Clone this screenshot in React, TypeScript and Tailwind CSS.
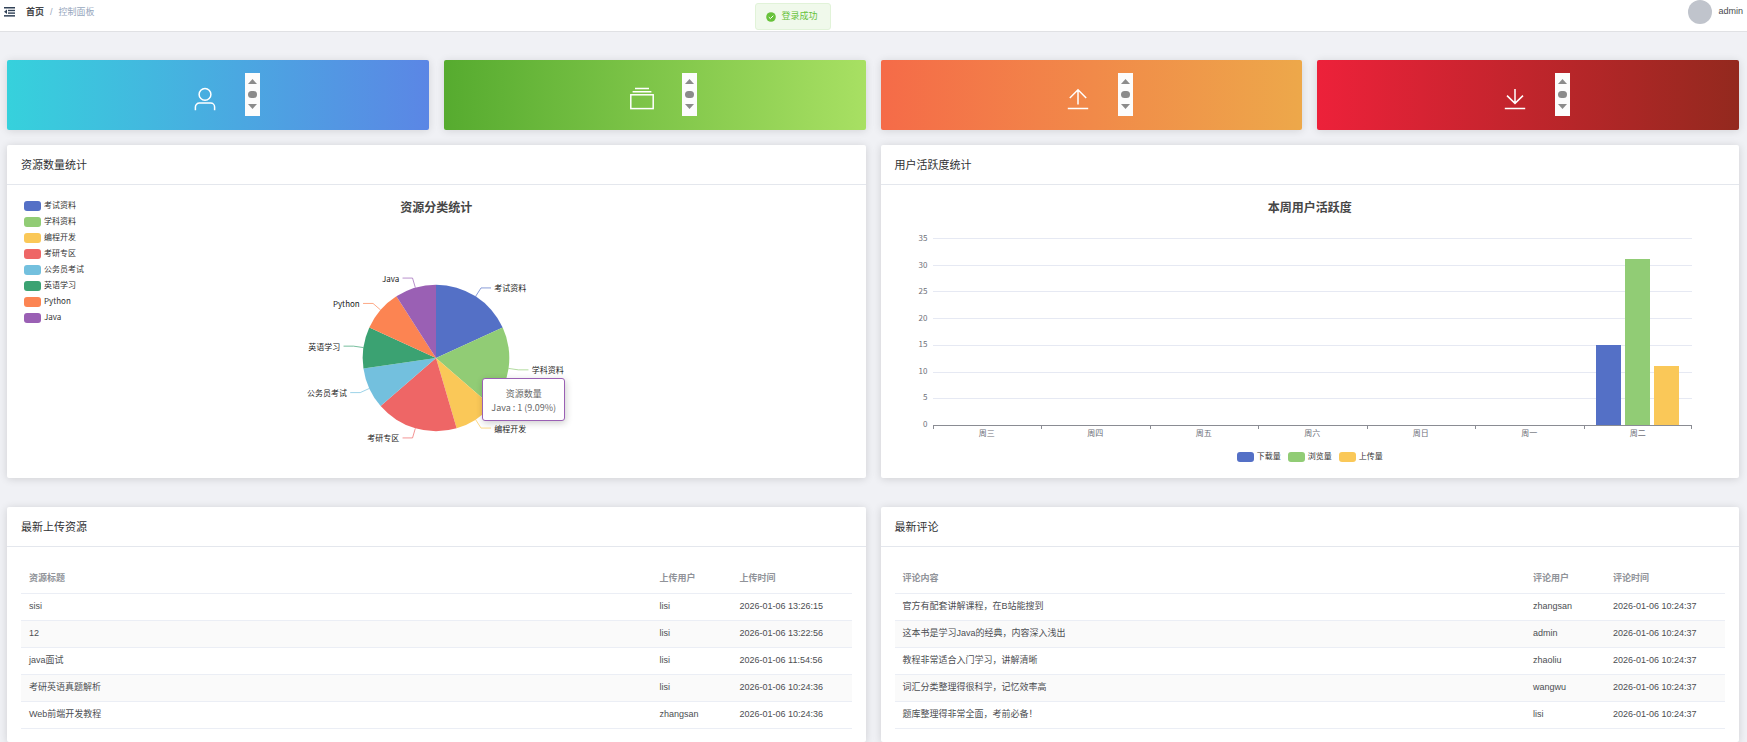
import type { ReactNode } from 'react';

const PALETTE = ['#5470c6', '#91cc75', '#fac858', '#ee6666', '#73c0de', '#3ba272', '#fc8452', '#9a60b4'];

const CATEGORIES = [
  { name: '考试资料', value: 2 },
  { name: '学科资料', value: 2 },
  { name: '编程开发', value: 1 },
  { name: '考研专区', value: 2 },
  { name: '公务员考试', value: 1 },
  { name: '英语学习', value: 1 },
  { name: 'Python', value: 1 },
  { name: 'Java', value: 1 },
];

const DAYS = ['周三', '周四', '周五', '周六', '周日', '周一', '周二'];
const SERIES = [
  { name: '下载量', data: [0, 0, 0, 0, 0, 0, 15] },
  { name: '浏览量', data: [0, 0, 0, 0, 0, 0, 31] },
  { name: '上传量', data: [0, 0, 0, 0, 0, 0, 11] },
];
const TICKS = [35, 30, 25, 20, 15, 10, 5, 0];
const AXIS_MAX = 35;

const UPLOADS = [
  ['sisi', 'lisi', '2026-01-06 13:26:15'],
  ['12', 'lisi', '2026-01-06 13:22:56'],
  ['java面试', 'lisi', '2026-01-06 11:54:56'],
  ['考研英语真题解析', 'lisi', '2026-01-06 10:24:36'],
  ['Web前端开发教程', 'zhangsan', '2026-01-06 10:24:36'],
];

const COMMENTS = [
  ['官方有配套讲解课程，在B站能搜到', 'zhangsan', '2026-01-06 10:24:37'],
  ['这本书是学习Java的经典，内容深入浅出', 'admin', '2026-01-06 10:24:37'],
  ['教程非常适合入门学习，讲解清晰', 'zhaoliu', '2026-01-06 10:24:37'],
  ['词汇分类整理得很科学，记忆效率高', 'wangwu', '2026-01-06 10:24:37'],
  ['题库整理得非常全面，考前必备！', 'lisi', '2026-01-06 10:24:37'],
];

function FoldIcon() {
  return (
    <svg width="11" height="10" viewBox="0 0 11 10" fill="#304156" aria-hidden="true">
      <rect x="0" y="0" width="11" height="1.5" />
      <rect x="4" y="2.8" width="7" height="1.4" />
      <rect x="4" y="5.4" width="7" height="1.4" />
      <rect x="0" y="8.1" width="11" height="1.5" />
      <path d="M0 4.8 3 2.6V7z" />
    </svg>
  );
}

function Header() {
  return (
    <header className="flex h-8 items-start justify-between border-b border-[#e0e1e4] bg-white pr-1 pl-1">
      <div className="flex h-6 items-center">
        <button type="button" aria-label="折叠菜单">
          <FoldIcon />
        </button>
        <nav className="ml-[11px] flex items-center text-[9px] leading-3">
          <a href="#" className="font-bold text-[#45464a]">首页</a>
          <span className="mx-[6px] text-[#97a8be]">/</span>
          <span className="text-[#97a8be]">控制面板</span>
        </nav>
      </div>
      <button type="button" className="flex h-6 items-center gap-[6px] text-[9px] text-[#48494d]">
        <span className="size-6 rounded-full bg-[#c0c4cc]" />
        admin
      </button>
    </header>
  );
}

function Toast() {
  return (
    <div
      role="status"
      className="absolute top-[3px] left-1/2 -ml-[81px] flex h-[27px] w-[76px] -translate-x-1/2 items-center gap-[6px] rounded-[3px] border border-[#e1f3d8] bg-[#f0f9eb] pl-[10px] text-[9px] text-[#67c23a]"
    >
      <svg width="10" height="10" viewBox="0 0 10 10" aria-hidden="true">
        <circle cx="5" cy="5" r="4.8" fill="#67c23a" />
        <path d="M2.8 5.1 4.4 6.6 7.3 3.7" fill="none" stroke="#fff" strokeWidth="1" />
      </svg>
      登录成功
    </div>
  );
}

// Contador desbordado: solo queda a la vista la barra de scroll
function MiniScrollbar() {
  return (
    <svg width="15" height="43" viewBox="0 0 15 43" className="mb-px" aria-hidden="true">
      <rect width="15" height="43" fill="#fcfcfc" />
      <g fill="#8b8b8b">
        <path d="M7.5 6 12 11H3z" />
        <rect x="3" y="18" width="9" height="7" rx="3.5" />
        <path d="M3 31h9l-4.5 5z" />
      </g>
    </svg>
  );
}

function StatCard({ gradient, children }: { gradient: string; children: ReactNode }) {
  return (
    <div className={`flex h-[70px] items-center justify-center gap-7 rounded-[2px] pl-[17px] shadow-[0_1px_8px_rgba(0,0,0,0.12)] ${gradient}`}>
      <svg
        width="24"
        height="24"
        viewBox="0 0 24 24"
        fill="none"
        stroke="#fff"
        strokeWidth="1.5"
        className="mt-2"
        aria-hidden="true"
      >
        {children}
      </svg>
      <MiniScrollbar />
    </div>
  );
}

function Panel({ title, children }: { title: string; children: ReactNode }) {
  return (
    <section className="rounded-[2px] bg-white shadow-[0_1px_8px_rgba(0,0,0,0.14)]">
      <h2 className="flex h-10 items-center border-b border-[#e4e7ed] px-[14px] pt-[2px] text-[11px] text-[#303133]">{title}</h2>
      <div className="px-[14px] pt-[14px] pb-[13px]">{children}</div>
    </section>
  );
}

function LegendItem({ name, color }: { name: string; color: string }) {
  return (
    <li className="flex h-[10px] items-start gap-[3px] text-[8px] leading-2 text-[#333]">
      <span className="h-[10px] w-[17px] rounded-[3px]" style={{ backgroundColor: color }} />
      {name}
    </li>
  );
}

function PieChart() {
  const cx = 150;
  const cy = 93;
  const r = 73.3;
  const total = CATEGORIES.reduce((sum, c) => sum + c.value, 0);
  const point = (angle: number, radius: number) => [cx + Math.sin(angle) * radius, cy - Math.cos(angle) * radius];
  let angle = 0;

  return (
    <svg width="300" height="180" viewBox="0 0 300 180" role="img" aria-label="资源分类统计">
      {CATEGORIES.map((category, i) => {
        const start = angle;
        const end = start + (category.value / total) * Math.PI * 2;
        angle = end;
        const mid = (start + end) / 2;
        const side = Math.sin(mid) > 0 ? 1 : -1;
        const [x1, y1] = point(start, r);
        const [x2, y2] = point(end, r);
        const [lx, ly] = point(mid, r);
        const [ex, ey] = point(mid, r + 10);
        return (
          <g key={category.name}>
            <path d={`M${cx} ${cy}L${x1} ${y1}A${r} ${r} 0 0 1 ${x2} ${y2}Z`} fill={PALETTE[i]} />
            <path d={`M${lx} ${ly}L${ex} ${ey}H${ex + side * 10}`} fill="none" stroke={PALETTE[i]} strokeWidth="0.7" />
            <text
              x={ex + side * 13.3}
              y={ey}
              dominantBaseline="central"
              textAnchor={side > 0 ? 'start' : 'end'}
              className="fill-[#222] text-[8px]"
            >
              {category.name}
            </text>
          </g>
        );
      })}
    </svg>
  );
}

function CategoryChart() {
  return (
    <div className="grid h-[266px] grid-cols-[1fr_300px_1fr] font-['Noto_Sans_CJK_SC',sans-serif]">
      <ul className="flex flex-col gap-[6px] pt-[2px] pl-[3px]">
        {CATEGORIES.map((category, i) => (
          <LegendItem key={category.name} name={category.name} color={PALETTE[i]} />
        ))}
      </ul>
      <div className="relative">
        <h3 className="text-center text-xs leading-4 font-bold text-[#464646]">资源分类统计</h3>
        <div className="mt-[50px]">
          <PieChart />
        </div>
        <div className="absolute top-[179px] left-[196px] h-[43px] w-[83px] rounded-[3px] border border-[#9a60b4] bg-white pt-2 text-center text-[9px] leading-[14px] whitespace-nowrap text-[#666] shadow-[1px_2px_7px_rgba(0,0,0,0.2)]">
          <p>资源数量</p>
          <p>Java : 1 (9.09%)</p>
        </div>
      </div>
    </div>
  );
}

function ActivityChart() {
  return (
    <div className="flex h-[266px] flex-col font-['Noto_Sans_CJK_SC',sans-serif]">
      <h3 className="text-center text-xs leading-4 font-bold text-[#464646]">本周用户活跃度</h3>
      <div className="mt-[23px] grid grid-cols-[38px_1fr] pr-[33px] text-[8px] text-[#6e7079]">
        <div className="flex h-[188px] flex-col justify-between pr-[5px]">
          {TICKS.map((tick) => (
            <span key={tick} className="flex h-px items-center justify-end pb-[2px]">{tick}</span>
          ))}
        </div>
        <div className="grid h-[188px]">
          <div className="col-start-1 row-start-1 flex flex-col justify-between">
            {TICKS.map((tick) => (
              <div key={tick} className={tick === 0 ? 'h-px bg-[#8a8c93]' : 'h-px bg-[#e6e9f3]'} />
            ))}
          </div>
          <div className="col-start-1 row-start-1 grid grid-cols-7 pb-px">
            {DAYS.map((day, i) => (
              <div key={day} className="flex items-end justify-center gap-1">
                {SERIES.map((serie, s) => (
                  <div
                    key={serie.name}
                    className="w-[25px]"
                    style={{ height: `${(serie.data[i] / AXIS_MAX) * 100}%`, backgroundColor: PALETTE[s] }}
                  />
                ))}
              </div>
            ))}
          </div>
        </div>
        <div className="col-start-2 grid grid-cols-7">
          {DAYS.map((day) => (
            <div key={day} className="text-center">
              <div className="flex h-[3px] justify-between">
                <span className="w-px bg-[#8a8c93]" />
                {day === DAYS[DAYS.length - 1] && <span className="w-px bg-[#8a8c93]" />}
              </div>
              <p className="leading-2">{day}</p>
            </div>
          ))}
        </div>
      </div>
      <ul className="mt-[15px] flex justify-center gap-[7px]">
        {SERIES.map((serie, i) => (
          <LegendItem key={serie.name} name={serie.name} color={PALETTE[i]} />
        ))}
      </ul>
    </div>
  );
}

function RecordTable({ columns, rows }: { columns: string[]; rows: string[][] }) {
  return (
    <table className="w-full table-fixed text-left text-[9px] leading-3 text-[#4c4e52]">
      <colgroup>
        <col />
        <col className="w-20" />
        <col className="w-[120px]" />
      </colgroup>
      <thead>
        <tr className="h-8 border-b border-[#ebeef5] text-[#909399]">
          {columns.map((column) => (
            <th key={column} scope="col" className="px-2 pt-[3px] font-bold">{column}</th>
          ))}
        </tr>
      </thead>
      <tbody>
        {rows.map((row, i) => (
          <tr key={i} className="h-[27px] border-b border-[#ebeef5] even:bg-[#fafafa]">
            {row.map((cell, c) => (
              <td key={c} className="px-2 pb-px">{cell}</td>
            ))}
          </tr>
        ))}
      </tbody>
    </table>
  );
}

export default function App() {
  return (
    <div className="relative min-h-screen bg-[#f0f1f5] font-['Liberation_Sans','Noto_Sans_CJK_SC',sans-serif]">
      <Header />
      <Toast />
      <main className="pt-7 pr-2 pl-[7px]">
        <div className="grid grid-cols-4 gap-[15px]">
          <StatCard gradient="bg-[linear-gradient(to_right,#36d1dc,#5b86e5)]">
            <circle cx="12" cy="7.4" r="5.9" />
            <path d="M2.4 23.3v-3.2a4 4 0 0 1 4-4h11.2a4 4 0 0 1 4 4v3.2" />
          </StatCard>
          <StatCard gradient="bg-[linear-gradient(to_right,#56ab2f,#a8e063)]">
            <rect x="0.8" y="7.8" width="22.4" height="13.8" />
            <path d="M2.6 4.7h18.8M5 1.4h14" />
          </StatCard>
          <StatCard gradient="bg-[linear-gradient(to_right,#f56b48,#eda84a)]">
            <path d="M12 17.4V2.8M3.8 11 12 2.8l8.2 8.2M1.8 21.4h20.4" />
          </StatCard>
          <StatCard gradient="bg-[linear-gradient(to_right,#ed213a,#93291e)]">
            <path d="M12 2v14.4M4 8.6l8 7.8 8-7.8M1.8 21.4h20.4" />
          </StatCard>
        </div>

        <div className="mt-[15px] grid grid-cols-2 gap-x-[15px] gap-y-[29px]">
          <Panel title="资源数量统计">
            <CategoryChart />
          </Panel>
          <Panel title="用户活跃度统计">
            <ActivityChart />
          </Panel>
          <Panel title="最新上传资源">
            <RecordTable columns={['资源标题', '上传用户', '上传时间']} rows={UPLOADS} />
          </Panel>
          <Panel title="最新评论">
            <RecordTable columns={['评论内容', '评论用户', '评论时间']} rows={COMMENTS} />
          </Panel>
        </div>
      </main>
    </div>
  );
}
